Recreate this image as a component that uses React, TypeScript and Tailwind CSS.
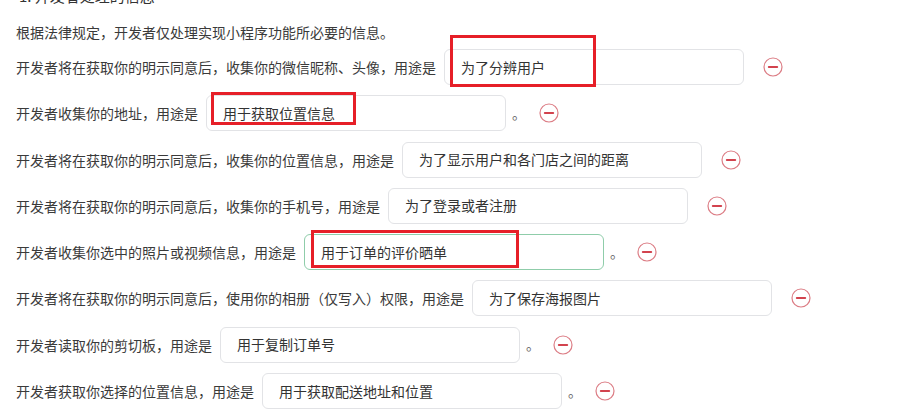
import React from "react"

type Row = {
  label: string
  value: string
  period?: boolean
  focused?: boolean
  mark?: { left: number; top: number; width: number; height: number }
}

const ROWS: Row[] = [
  {
    label: "开发者将在获取你的明示同意后，收集你的微信昵称、头像，用途是",
    value: "为了分辨用户",
    mark: { left: 6, top: -14, width: 146, height: 52 },
  },
  {
    label: "开发者收集你的地址，用途是",
    value: "用于获取位置信息",
    period: true,
    mark: { left: 5, top: -3, width: 145, height: 33 },
  },
  { label: "开发者将在获取你的明示同意后，收集你的位置信息，用途是", value: "为了显示用户和各门店之间的距离" },
  { label: "开发者将在获取你的明示同意后，收集你的手机号，用途是", value: "为了登录或者注册" },
  {
    label: "开发者收集你选中的照片或视频信息，用途是",
    value: "用于订单的评价晒单",
    period: true,
    focused: true,
    mark: { left: 7, top: -4, width: 208, height: 38 },
  },
  { label: "开发者将在获取你的明示同意后，使用你的相册（仅写入）权限，用途是", value: "为了保存海报图片" },
  { label: "开发者读取你的剪切板，用途是", value: "用于复制订单号", period: true },
  { label: "开发者获取你选择的位置信息，用途是", value: "用于获取配送地址和位置", period: true },
]

function MinusIcon() {
  return (
    <svg width="20" height="20" viewBox="0 0 20 20" aria-hidden>
      <circle cx="10" cy="10" r="9" fill="none" stroke="#dc7d85" strokeWidth="1.2" />
      <line x1="5.8" y1="10" x2="14.2" y2="10" stroke="#d2434e" strokeWidth="2" strokeLinecap="round" />
    </svg>
  )
}

export default function App() {
  return (
    <div
      className="min-h-screen bg-white px-4 text-[14px] text-[#3a3a3a]"
      style={{ fontFamily: '"Noto Sans CJK SC", "Noto Sans", sans-serif' }}
    >
      {/* 标题，截图里只露出下半截 */}
      <div className="h-[6px] overflow-hidden">
        <div className="-mt-[14px] pl-[3px] text-[15px] leading-[20px] text-[#333]">1. 开发者处理的信息</div>
      </div>

      <p className="mt-[16px] leading-[20px]">根据法律规定，开发者仅处理实现小程序功能所必要的信息。</p>

      <div className="mt-[7px] flex flex-col gap-[10.3px]">
        {ROWS.map((r) => (
          <div key={r.label} className="flex h-[36px] items-center">
            <span className="whitespace-nowrap leading-[20px]">{r.label}</span>
            <div className="relative ml-[8px]">
              <div
                className={
                  "flex h-[36px] w-[300px] items-center rounded-md border bg-white px-4 text-[#333] " +
                  (r.focused ? "border-[#8fcdaa]" : "border-[#e2e3e6]")
                }
              >
                {r.value}
              </div>
              {r.mark && (
                <div
                  className="absolute border-[3px] border-[#e61f28]"
                  style={{ left: r.mark.left, top: r.mark.top, width: r.mark.width, height: r.mark.height }}
                />
              )}
            </div>
            {r.period ? (
              <>
                <span className="ml-[6px] w-[14px] text-[#666]">。</span>
                <span className="ml-[13px] flex">
                  <MinusIcon />
                </span>
              </>
            ) : (
              <span className="ml-[19px] flex">
                <MinusIcon />
              </span>
            )}
          </div>
        ))}
      </div>
    </div>
  )
}
